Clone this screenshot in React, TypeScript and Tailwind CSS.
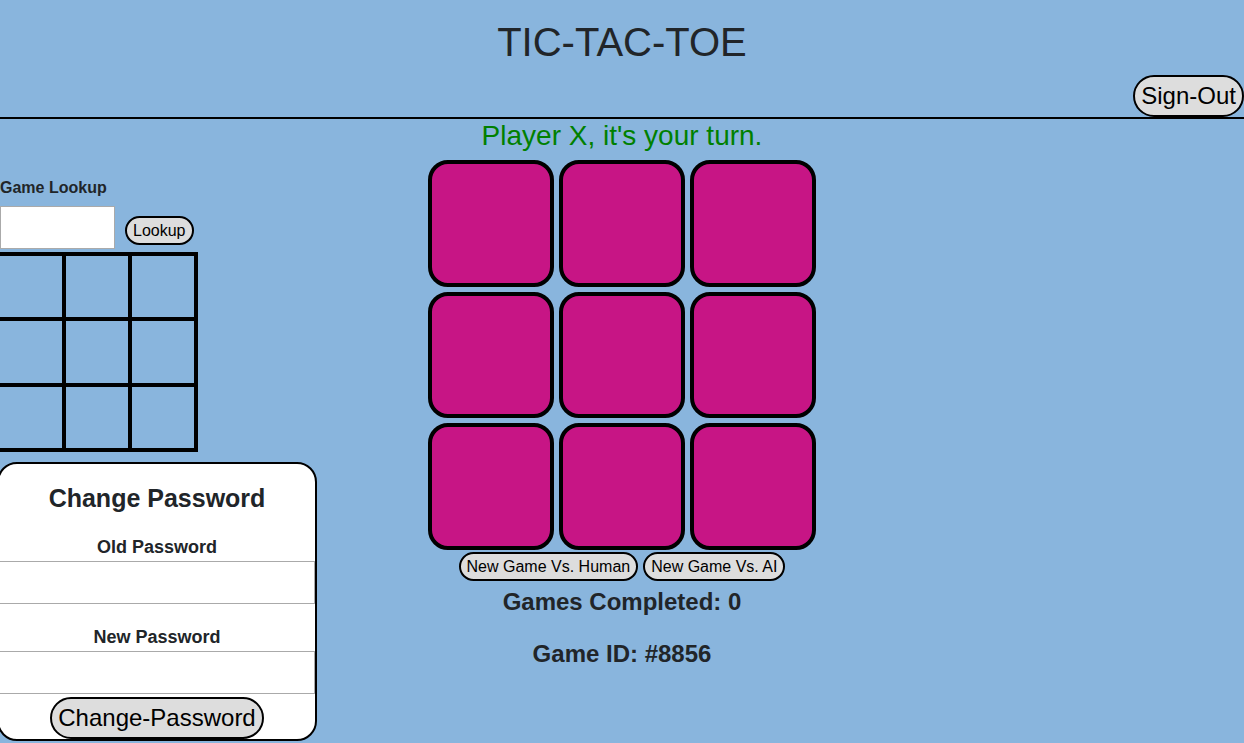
export default function App() {
  const cells = Array.from({ length: 9 }, (_, i) => i);

  return (
    <div
      className="min-h-screen w-full overflow-hidden bg-[#89b5dd] text-[#212529]"
      style={{ fontFamily: '"Liberation Sans", Arial, sans-serif' }}
    >
      {/* Header */}
      <header className="border-b-2 border-black pt-[18px]">
        <h1 className="text-center text-[40px] leading-[48px]">TIC-TAC-TOE</h1>
        <div className="mt-[9px] flex justify-end">
          <button className="rounded-full border-2 border-black bg-[#dddddd] px-[6px] py-[5px] text-[24px] leading-[28px] text-black">
            Sign-Out
          </button>
        </div>
      </header>

      <main className="grid grid-cols-[1fr_auto_1fr]">
        {/* Left column */}
        <div className="flex flex-col items-start pt-[59px]">
          <label className="text-[16px] font-bold leading-[19px]">Game Lookup</label>
          <div className="mt-[9px] flex items-end gap-[10px]">
            <input
              type="text"
              className="h-[43px] w-[115px] border border-[#aaaaaa] bg-white"
            />
            <button className="mb-[4px] rounded-full border-2 border-black bg-[#dddddd] px-[6px] py-[3px] text-[16px] leading-[19px] text-black">
              Lookup
            </button>
          </div>

          <div className="mt-[3px] grid grid-cols-[62px_62px_62px] grid-rows-[61px_62px_61px] gap-[4px] bg-black pt-[4px] pr-[4px] pb-[4px]">
            {cells.map((i) => (
              <div key={i} className="bg-[#89b5dd]" />
            ))}
          </div>

          <div className="-ml-[3px] mt-[10px] flex w-[320px] flex-col items-center rounded-[20px] border-2 border-black bg-white pt-[20px]">
            <h2 className="text-[25px] font-bold leading-[29px]">Change Password</h2>
            <label className="mt-[23px] text-[18px] font-bold leading-[22px]">Old Password</label>
            <input
              type="password"
              className="mt-[3px] h-[43px] w-full border border-[#aaaaaa] bg-white"
            />
            <label className="mt-[22px] text-[18px] font-bold leading-[22px]">New Password</label>
            <input
              type="password"
              className="mt-[3px] h-[43px] w-full border border-[#aaaaaa] bg-white"
            />
            <button className="mt-[3px] rounded-full border-2 border-black bg-[#dddddd] px-[6px] py-[5px] text-[24px] leading-[28px] text-black">
              Change-Password
            </button>
          </div>
        </div>

        {/* Center column */}
        <div className="flex flex-col items-center">
          <p className="text-[28px] leading-[34px] text-[#008000]">Player X, it's your turn.</p>
          <div className="mt-[7px] grid grid-cols-[126px_126px_126px] grid-rows-[127px_126px_127px] gap-[5px]">
            {cells.map((i) => (
              <div
                key={i}
                className="rounded-[20px] border-4 border-black bg-[#c71585]"
              />
            ))}
          </div>
          <div className="mt-[2px] flex gap-[5px]">
            <button className="rounded-full border-2 border-black bg-[#dddddd] px-[6px] py-[3px] text-[16px] leading-[19px] text-black">
              New Game Vs. Human
            </button>
            <button className="rounded-full border-2 border-black bg-[#dddddd] px-[6px] py-[3px] text-[16px] leading-[19px] text-black">
              New Game Vs. AI
            </button>
          </div>
          <h3 className="mt-[6px] text-[24px] font-bold leading-[29px]">Games Completed: 0</h3>
          <h3 className="mt-[23px] text-[24px] font-bold leading-[29px]">Game ID: #8856</h3>
        </div>

        <div />
      </main>
    </div>
  );
}
